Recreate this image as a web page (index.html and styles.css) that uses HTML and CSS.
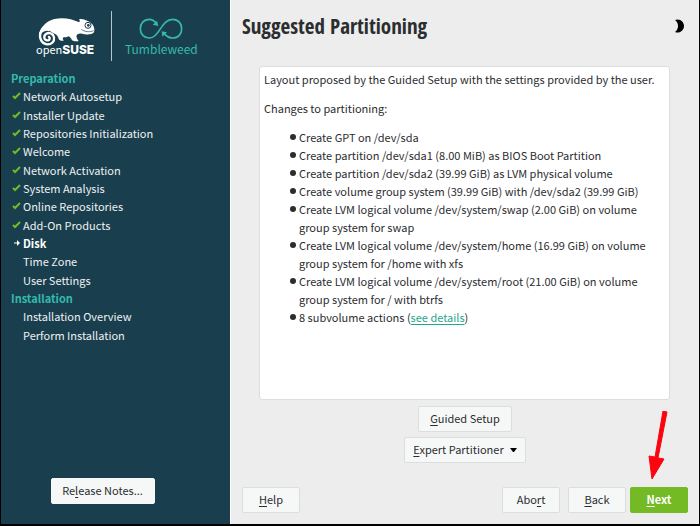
FILE: index.html
```html
<!DOCTYPE html>
<html lang="en">
<head>
<meta charset="utf-8">
<meta name="viewport" content="width=device-width, initial-scale=1">
<title>Suggested Partitioning</title>
<link rel="stylesheet" href="styles.css">
</head>
<body>
<div class="installer">
  <aside class="sidebar">
    <header class="brand">
      <div class="distro">
        <svg class="chameleon" viewBox="114 51 174 87" aria-hidden="true">
          <path fill="#fff" d="M117 106C117 84 140 63 163 57C188 51 215 56 238 67C240 63 239 59 237 57C253 57 268 63 277 73C282 80 285 89 282 97C275 106 256 104 246 101C238 99 233 101 230 106C228 111 231 116 236 124C227 124 220 124 216 121C214 116 211 112 206 109C201 112 196 112 191 112C187 114 188 118 191 122C183 123 178 121 176 116C173 107 168 102 160 100L148 92Z"/>
          <circle cx="141" cy="112" r="20" fill="#193f4f"/>
          <path fill="none" stroke="#fff" stroke-width="7" stroke-linecap="round" d="M121 99C117 116 126 132 141 133C155 134 164 124 162 112C160 101 148 96 139 101C130 106 131 120 141 121C148 122 152 115 147 111"/>
          <circle cx="264" cy="76" r="9" fill="#fff" stroke="#193f4f" stroke-width="3"/>
          <circle cx="265" cy="76" r="4" fill="#193f4f"/>
          <path fill="none" stroke="#193f4f" stroke-width="2" d="M244 88C254 96 268 97 281 92"/>
        </svg>
        <span class="wordmark">open<b>SUSE</b></span>
      </div>
      <div class="edition">
        <svg class="loop" viewBox="0 0 132 66" aria-hidden="true">
          <g fill="none" stroke="#35b9ab" stroke-width="5">
            <path d="M52 16C44 6 36 4 31 4C14 4 4 17 4 32C4 48 15 60 31 60C61 60 67 4 101 4C118 4 128 17 128 32C128 48 118 60 101 60C90 60 81 53 75 46"/>
          </g>
          <path fill="#35b9ab" d="M58 24L41 20L54 8ZM68 40L84 43L70 56Z"/>
        </svg>
        <span>Tumbleweed</span>
      </div>
    </header>
    <nav class="steps" aria-label="Installation steps">
      <h2>Preparation</h2>
      <ul>
        <li class="done"><svg viewBox="0 0 9 8"><path d="M1 4L3 6L8 1"/></svg>Network Autosetup</li>
        <li class="done"><svg viewBox="0 0 9 8"><path d="M1 4L3 6L8 1"/></svg>Installer Update</li>
        <li class="done"><svg viewBox="0 0 9 8"><path d="M1 4L3 6L8 1"/></svg>Repositories Initialization</li>
        <li class="done"><svg viewBox="0 0 9 8"><path d="M1 4L3 6L8 1"/></svg>Welcome</li>
        <li class="done"><svg viewBox="0 0 9 8"><path d="M1 4L3 6L8 1"/></svg>Network Activation</li>
        <li class="done"><svg viewBox="0 0 9 8"><path d="M1 4L3 6L8 1"/></svg>System Analysis</li>
        <li class="done"><svg viewBox="0 0 9 8"><path d="M1 4L3 6L8 1"/></svg>Online Repositories</li>
        <li class="done"><svg viewBox="0 0 9 8"><path d="M1 4L3 6L8 1"/></svg>Add-On Products</li>
        <li class="current" aria-current="step"><svg viewBox="0 0 9 8"><path d="M2 4H5"/><path class="tip" d="M5 1L8 4L5 7Z"/></svg>Disk</li>
        <li>Time Zone</li>
        <li>User Settings</li>
      </ul>
      <h2>Installation</h2>
      <ul>
        <li>Installation Overview</li>
        <li>Perform Installation</li>
      </ul>
    </nav>
    <button class="btn release" type="button">Re<u>l</u>ease Notes...</button>
  </aside>

  <main class="content">
    <header class="titlebar">
      <h1>Suggested Partitioning</h1>
      <button class="theme" type="button" aria-label="Toggle dark mode">
        <svg viewBox="0 0 10 14" aria-hidden="true"><path d="M1 1C6 -1 10 3 10 7C10 11 6 15 1 13C5 10 5 4 1 1Z"/></svg>
      </button>
    </header>
    <section class="proposal">
      <p>Layout proposed by the Guided Setup with the settings provided by the user.</p>
      <p>Changes to partitioning:</p>
      <ul>
        <li>Create GPT on /dev/sda</li>
        <li>Create partition /dev/sda1 (8.00 MiB) as BIOS Boot Partition</li>
        <li>Create partition /dev/sda2 (39.99 GiB) as LVM physical volume</li>
        <li>Create volume group system (39.99 GiB) with /dev/sda2 (39.99 GiB)</li>
        <li>Create LVM logical volume /dev/system/swap (2.00 GiB) on volume group system for swap</li>
        <li>Create LVM logical volume /dev/system/home (16.99 GiB) on volume group system for /home with xfs</li>
        <li>Create LVM logical volume /dev/system/root (21.00 GiB) on volume group system for / with btrfs</li>
        <li>8 subvolume actions (<a href="#details">see details</a>)</li>
      </ul>
    </section>
    <div class="tools">
      <button class="btn guided" type="button"><u>G</u>uided Setup</button>
      <button class="btn expert" type="button"><u>E</u>xpert Partitioner<svg viewBox="0 0 7 4" aria-hidden="true"><path d="M0 0H7L4 4H3Z"/></svg></button>
    </div>
    <footer class="actions">
      <button class="btn help" type="button"><u>H</u>elp</button>
      <button class="btn" type="button">Abo<u>r</u>t</button>
      <button class="btn" type="button"><u>B</u>ack</button>
      <div class="primary">
        <button class="btn next" type="button"><u>N</u>ext</button>
        <svg class="pointer" viewBox="0 0 20 68" aria-hidden="true"><path d="M15 0L19 1L10 47L16 48L4 68L1 45L7 46Z"/></svg>
      </div>
    </footer>
  </main>
</div>
</body>
</html>
```
FILE: styles.css
```css
* { box-sizing: border-box; }

body {
  margin: 0;
  background: #000;
  color: #2b2d2f;
  font: 11px/18px "Noto Sans CJK SC", "Open Sans", sans-serif;
}

h1, h2, p, ul { margin: 0; padding: 0; }
ul { list-style: none; }
u { text-underline-offset: 2px; }

.installer {
  display: grid;
  grid-template-columns: 229px 1fr;
  min-height: 100vh;
  padding: 0 1px 2px;
}

.sidebar {
  display: flex;
  flex-direction: column;
  padding: 11px 10px 20px;
  background: #193f4f;
  color: #eff1f1;
}

.brand {
  display: flex;
  height: 50px;
  margin: 0 24px;
}

.distro {
  display: flex;
  flex-direction: column;
  padding: 6px 15px 0 1px;
  border-right: 1px solid #b9c5ca;
}

.chameleon { width: 58px; height: 29px; margin-left: 2px; }

.wordmark {
  margin-top: -2px;
  color: #fff;
  font: 11px/11px "Noto Sans CJK SC", sans-serif;
}

.wordmark b { font: 800 12px/11px Inter, sans-serif; }

.edition {
  display: flex;
  flex-direction: column;
  align-items: center;
  padding: 7px 0 0 13px;
  color: #35b9ab;
  font-size: 12px;
}

.loop { width: 44px; height: 22px; }

.steps {
  display: grid;
  align-content: space-between;
  height: 275px;
  margin-top: 8px;
}

.steps ul { display: contents; }
.steps h2 { color: #35b9ab; font-size: 11px; line-height: 18px; }
.steps li { position: relative; padding-left: 12px; }

.steps li svg {
  position: absolute;
  top: 5px;
  left: 1px;
  width: 9px;
  height: 8px;
  fill: none;
  stroke: #73ba25;
  stroke-width: 2;
}

.steps .current { color: #fff; font-weight: 700; }
.steps .current svg { stroke: #fff; stroke-width: 1; }
.steps .tip { fill: #fff; stroke: none; }

.btn {
  min-width: 58px;
  height: 26px;
  padding: 0 10px 2px;
  border: 1px solid #dcdedd;
  border-radius: 2px;
  background: #f6f8f7;
  color: #2b2d2f;
  font: inherit;
  white-space: nowrap;
}

.release {
  align-self: center;
  width: 104px;
  margin-top: auto;
  margin-right: 26px;
  border-color: #f6f8f7;
}

.content {
  display: flex;
  flex-direction: column;
  padding: 0 11px 11px;
  border-left: 1px solid #fff;
  background: #ededed;
}

.titlebar {
  display: flex;
  align-items: center;
  justify-content: space-between;
  height: 52px;
}

h1 {
  font: 700 21px/32px "Open Sans Condensed", "Liberation Sans Narrow", "Noto Sans", sans-serif;
}

.theme {
  width: 14px;
  height: 14px;
  padding: 0;
  border: 0;
  background: none;
}

.theme svg { display: block; width: 10px; height: 14px; }

.proposal {
  flex: 1;
  margin: 14px 18px 0 17px;
  padding: 3px 4px 8px;
  border: 1px solid #dcdddd;
  border-radius: 3px;
  background: #fff;
}

.proposal p { margin-bottom: 11px; }
.proposal ul { padding-left: 35px; }
.proposal li { position: relative; }

.proposal li::before {
  content: "";
  position: absolute;
  top: 6px;
  left: -9px;
  width: 6px;
  height: 6px;
  border-radius: 50%;
  background: #2b2d2f;
}

.proposal a { color: #1fa78f; text-underline-offset: 2px; }

.tools {
  display: flex;
  flex-direction: column;
  align-items: center;
  gap: 5px;
  margin: 6px 0 24px;
}

.guided { width: 94px; }
.expert { width: 122px; padding: 0 4px 2px; }
.expert svg { width: 7px; height: 4px; margin: 0 0 2px 6px; }

.actions { display: flex; gap: 8px; }
.help { margin-right: auto; }
.primary { position: relative; margin-left: -4px; }

.next {
  border-color: #73ba25;
  background: #73ba25;
  color: #fff;
  font-weight: 700;
}

.pointer {
  position: absolute;
  right: 20px;
  bottom: 34px;
  width: 20px;
  height: 68px;
  fill: #fb0410;
  stroke: #fb0410;
}
```
